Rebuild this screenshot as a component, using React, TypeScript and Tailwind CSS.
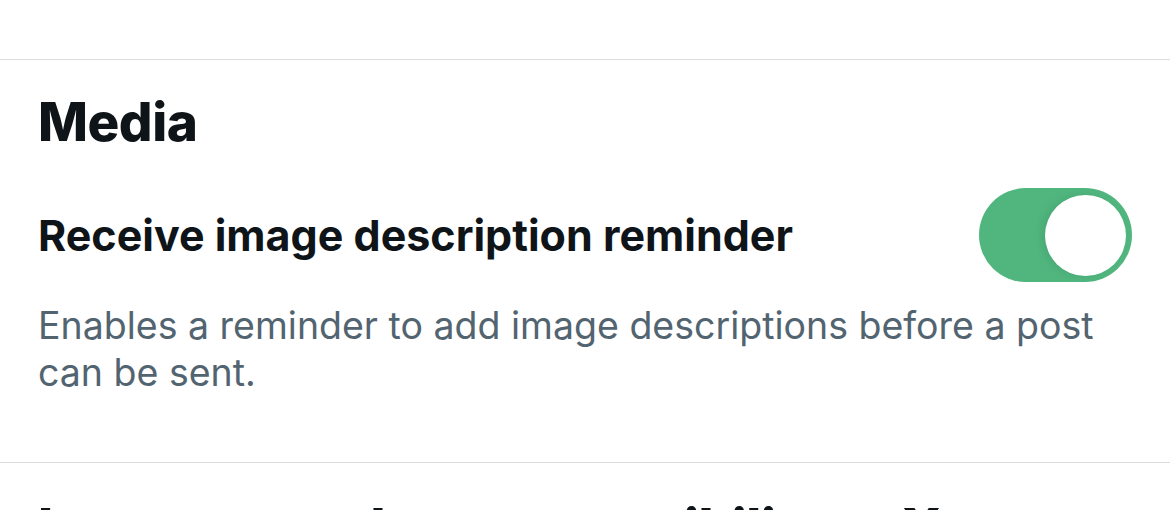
import React from "react";

const FONT = { fontFamily: "Inter, 'Noto Sans', 'Liberation Sans', sans-serif" };

function Toggle({ on }: { on: boolean }) {
  return (
    <div
      className={`relative h-[94px] w-[153px] shrink-0 rounded-full ${
        on ? "bg-[#50b67e]" : "bg-[#cfd9de]"
      }`}
    >
      <div className="absolute right-[6px] top-[7px] h-[81px] w-[81px] rounded-full bg-white shadow-[-4px_0_8px_rgba(0,0,0,0.08)]" />
    </div>
  );
}

export default function App() {
  return (
    <div className="h-[510px] w-[1170px] overflow-hidden bg-white" style={FONT}>
      <div className="h-[60px] border-b border-[#dadee1]" />

      <section className="border-b border-[#dadee1] px-[38px] pb-[66px]">
        <h2 className="pt-[30px] text-[53px] font-extrabold leading-[64px] tracking-[-0.5px] text-[#0f1419]">
          Media
        </h2>
        <div className="mt-[34px] flex items-center justify-between">
          <div className="text-[43px] font-bold leading-[52px] text-[#0f1419]">
            Receive image description reminder
          </div>
          <Toggle on />
        </div>
        <p className="mt-[20px] pr-[30px] text-[37.5px] leading-[47px] text-[#536471]">
          Enables a reminder to add image descriptions before a post can be sent.
        </p>
      </section>

      <h2 className="whitespace-nowrap px-[38px] pt-[33px] text-[53px] font-extrabold leading-[64px] tracking-[-0.5px] text-[#0f1419]">
        Learn more about accessibility at X
      </h2>
    </div>
  );
}
